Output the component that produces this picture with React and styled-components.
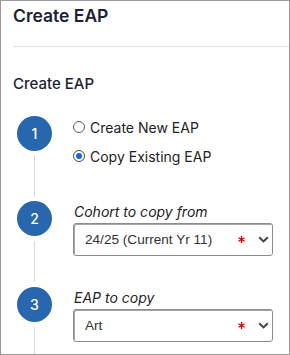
import React from "react";
import styled, { createGlobalStyle } from "styled-components";

const Global = createGlobalStyle`
  html, body { margin: 0; padding: 0; background: #fff; }
  * { box-sizing: border-box; }
`;

const Frame = styled.div`
  width: 290px;
  height: 355px;
  border: 1px solid #9a9a9a;
  overflow: hidden;
  background: #fff;
  font-family: Inter, "Noto Sans", sans-serif;
  color: #1f2430;
`;

const Header = styled.div`
  margin-left: 12px;
  height: 46px;
  border-bottom: 1px solid #e3e3e3;
  padding-top: 3px;
`;

const Title = styled.h1`
  margin: 0;
  font-size: 17.5px;
  line-height: 24px;
  font-weight: 600;
  color: #1c2233;
`;

const Section = styled.div`
  padding: 27px 0 0 12px;
`;

const SubTitle = styled.h2`
  margin: 0;
  font-size: 15px;
  line-height: 20px;
  font-weight: 500;
  color: #1c2233;
`;

const Steps = styled.div`
  margin-top: 22px;
  margin-left: 4px;
  display: flex;
  flex-direction: column;
`;

const Step = styled.div`
  display: flex;
  gap: 21px;
  min-height: ${(p) => p.$h}px;
`;

const Rail = styled.div`
  width: 35px;
  flex: none;
  display: flex;
  flex-direction: column;
  align-items: center;
`;

const Circle = styled.div`
  width: 35px;
  height: 35px;
  border-radius: 50%;
  background: #2866ad;
  color: #fff;
  display: flex;
  align-items: center;
  justify-content: center;
  font-size: 14px;
  font-weight: 500;
  flex: none;
`;

const Line = styled.div`
  width: 1px;
  flex: 1;
  background: #d9d9d9;
  margin: 5px 0 5px;
`;

const Body = styled.div`
  flex: 1;
  padding-top: 1px;
  padding-right: 16px;
  display: flex;
  flex-direction: column;
`;

const RadioGroup = styled.div`
  display: flex;
  flex-direction: column;
  gap: 9px;
`;

const RadioRow = styled.label`
  display: flex;
  align-items: center;
  gap: 5px;
  height: 20px;
  font-size: 14px;
  color: #222;
`;

const RadioDot = styled.span`
  width: 12px;
  height: 12px;
  border-radius: 50%;
  border: 1px solid ${(p) => (p.$on ? "#4a4a4a" : "#5a5a5a")};
  display: flex;
  align-items: center;
  justify-content: center;
  background: #fff;
  &::after {
    content: "";
    width: 6px;
    height: 6px;
    border-radius: 50%;
    background: ${(p) => (p.$on ? "#1466d8" : "transparent")};
  }
`;

const FieldLabel = styled.div`
  font-size: 14px;
  line-height: 20px;
  font-style: italic;
  color: #222;
  padding-left: 1px;
`;

const Select = styled.div`
  margin-top: 1px;
  height: 33px;
  border: 1px solid #8c8c8c;
  border-radius: 3px;
  box-shadow: inset 1px 1px 0 rgba(0, 0, 0, 0.35);
  display: flex;
  align-items: center;
  padding: 0 3px 0 11px;
  font-family: "Liberation Sans", Arial, sans-serif;
  font-size: 13.6px;
  color: #333;
`;

const SelectText = styled.span`
  flex: 1;
`;

const Req = styled.svg`
  width: 7px;
  height: 7px;
  margin-right: 13px;
`;

const Chevron = styled.svg`
  width: 11px;
  height: 7px;
`;

const Asterisk = () => (
  <Req viewBox="0 0 8 8">
    <g stroke="#d00000" strokeWidth="1.5">
      <line x1="4" y1="0" x2="4" y2="8" />
      <line x1="0.5" y1="2" x2="7.5" y2="6" />
      <line x1="0.5" y1="6" x2="7.5" y2="2" />
    </g>
  </Req>
);

const Caret = () => (
  <Chevron viewBox="0 0 11 7">
    <path d="M1.2 1.2 L5.5 5.4 L9.8 1.2" fill="none" stroke="#444" strokeWidth="2" />
  </Chevron>
);

const Dropdown = ({ value }) => (
  <Select>
    <SelectText>{value}</SelectText>
    <Asterisk />
    <Caret />
  </Select>
);

export default function App() {
  return (
    <>
      <Global />
      <Frame>
        <Header>
          <Title>Create EAP</Title>
        </Header>
        <Section>
          <SubTitle>Create EAP</SubTitle>
          <Steps>
            <Step $h={85}>
              <Rail>
                <Circle>1</Circle>
                <Line />
              </Rail>
              <Body>
                <RadioGroup>
                  <RadioRow>
                    <RadioDot />
                    Create New EAP
                  </RadioRow>
                  <RadioRow>
                    <RadioDot $on />
                    Copy Existing EAP
                  </RadioRow>
                </RadioGroup>
              </Body>
            </Step>
            <Step $h={86}>
              <Rail>
                <Circle>2</Circle>
                <Line />
              </Rail>
              <Body>
                <FieldLabel>Cohort to copy from</FieldLabel>
                <Dropdown value="24/25 (Current Yr 11)" />
              </Body>
            </Step>
            <Step $h={86}>
              <Rail>
                <Circle>3</Circle>
                <Line />
              </Rail>
              <Body>
                <FieldLabel>EAP to copy</FieldLabel>
                <Dropdown value="Art" />
              </Body>
            </Step>
          </Steps>
        </Section>
      </Frame>
    </>
  );
}
